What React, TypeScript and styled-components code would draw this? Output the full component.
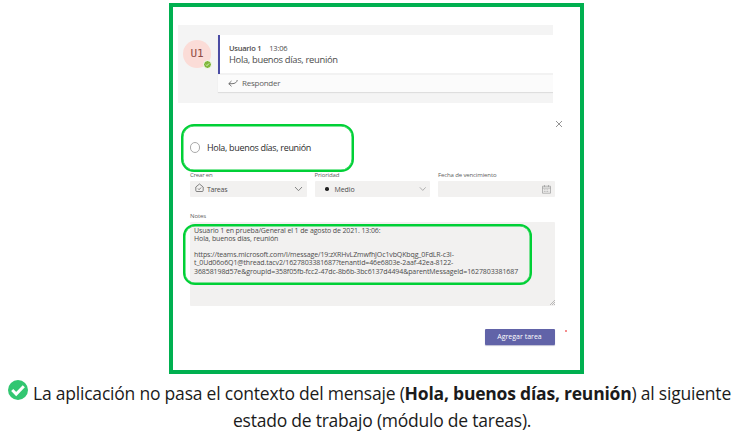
import React from 'react';
import styled, { createGlobalStyle } from 'styled-components';

const Global = createGlobalStyle`
  * { box-sizing: border-box; }
  body { margin: 0; background: #fff; font-family: "Open Sans", "Noto Sans", sans-serif; }
  svg { display: block; flex: none; }
`;

const Page = styled.main`
  width: 738px;
  height: 437px;
  padding-top: 3px;
  overflow: hidden;
`;

const Frame = styled.section`
  width: 415px;
  height: 371px;
  margin-left: 169px;
  padding: 18px 0 0 5px;
  border: 4px solid #00b050;
`;

const Line = styled.div<{ $size: number; $height: number; $spacing?: number; $color?: string; $weight?: number }>`
  font-size: ${p => p.$size}px;
  line-height: ${p => p.$height}px;
  height: ${p => p.$height}px;
  letter-spacing: ${p => p.$spacing ?? 0}px;
  color: ${p => p.$color ?? '#4c4c4c'};
  font-weight: ${p => p.$weight ?? 400};
  white-space: pre;
`;

const Label = styled.div<{ $spacing?: number }>`
  height: 10px;
  font-size: 6px;
  line-height: 8px;
  letter-spacing: ${p => p.$spacing ?? -0.12}px;
  color: #606060;
  white-space: pre;
`;

const Message = styled.div`
  display: flex;
  width: 375px;
  height: 78px;
  padding: 10px 0 0 5px;
  background: #f4f4f4;
`;

const Avatar = styled.div`
  position: relative;
  display: grid;
  place-items: center;
  width: 28px;
  height: 28px;
  margin: 5px 7px 0 0;
  border-radius: 50%;
  background: #fbdcd7;
  color: #8f4a42;
  font: 11px/14px "DejaVu Sans Mono", monospace;
`;

const Presence = styled.div`
  position: absolute;
  right: -1px;
  bottom: -1px;
  width: 9px;
  height: 9px;
  border: 1px solid #fff;
  border-radius: 50%;
  background: #80b83c;
`;

const Card = styled.div`
  width: 335px;
  height: 57px;
  background: #fbfbfb;
  box-shadow: 0 1px 1px #dedede;
  clip-path: inset(-2px 0 -3px -2px);
`;

const CardBody = styled.div`
  height: 39px;
  padding: 7.5px 0 0 9px;
  border-left: 2px solid #4a4ca4;
  background: linear-gradient(#fff 38px, #f2f2f2 38px);
`;

const Meta = styled.div`
  display: flex;
  gap: 8px;
`;

const Reply = styled.div`
  display: flex;
  align-items: center;
  gap: 4px;
  height: 18px;
  padding: 0 0 1px 10px;
  border-top: 1px solid #f2f2f2;
`;

const CloseRow = styled.div`
  display: flex;
  height: 21px;
  padding: 17px 0 0 377px;
`;

const TitleBox = styled.div`
  display: flex;
  align-items: center;
  gap: 7px;
  width: 173px;
  height: 48px;
  margin-left: 3px;
  padding: 0 0 1px 6.5px;
  border: 2px solid #00d036;
  border-radius: 13px;
  box-shadow: inset 0 0 0 .5px #00d036;
`;

const Radio = styled.div`
  width: 10.5px;
  height: 10.5px;
  border: 1px solid #aaa;
  border-radius: 50%;
`;

const Fields = styled.div`
  display: grid;
  grid-template-columns: 116.5px 115.5px 116.5px;
  gap: 8px;
  margin: -1px 0 0 12px;
`;

const Control = styled.div<{ $left: number }>`
  display: flex;
  align-items: center;
  height: 16px;
  padding: 0 4px 0 ${p => p.$left}px;
  background: #f2f1f0;
  border-radius: 1px;
  & > :last-child { margin-left: auto; }
`;

const Bullet = styled.div`
  width: 3.5px;
  height: 3.5px;
  margin-right: 6px;
  border-radius: 50%;
  background: #222;
`;

const Home = styled.svg`
  margin: -2px 3.5px 0 0;
`;

const NotesLabel = styled.div`
  height: 25px;
  padding: 15px 0 0 12px;
`;

const Notes = styled.div`
  position: relative;
  width: 364.5px;
  height: 84px;
  margin-left: 12px;
  padding: 5px 0 0 4px;
  background: #f2f1f0;
  border-radius: 1px;
`;

const Highlight = styled.div`
  position: absolute;
  left: -7px;
  top: 2px;
  width: 349px;
  height: 61px;
  border: 2px solid #00d036;
  border-radius: 12px;
  box-shadow: inset 0 0 0 .5px #00d036;
`;

const Grip = styled.div`
  position: absolute;
  right: 0;
  bottom: 1px;
`;

const Actions = styled.div`
  display: flex;
  gap: 10.5px;
  margin: 23px 0 0 306.5px;
`;

const Button = styled.button`
  display: grid;
  place-items: center;
  width: 70px;
  height: 16px;
  padding: 0;
  border: 0;
  border-radius: 1px;
  background: #6163a8;
  box-shadow: 0 1px 1px #bdbdd2;
  font-family: inherit;
`;

const RedDot = styled.div`
  width: 2px;
  height: 2px;
  margin-top: 1px;
  background: #f58d8d;
`;

const Caption = styled.footer`
  display: grid;
  grid-template-columns: 20px 1fr;
  column-gap: 5px;
  padding: 6px 0 0 8px;
`;

const SecondLine = styled.div`
  grid-column: 1 / -1;
  padding-left: 225px;
`;

const Chevron = ({ size = 9, color = '#777' }: { size?: number; color?: string }) => (
  <svg width={size} height="6" viewBox="0 0 9 6" fill="none" stroke={color} strokeWidth=".9"><path d="M1 1l3.5 3.7L8 1" /></svg>
);

export default function App() {
  return (
    <Page>
      <Global />
      <Frame>
        <Message>
          <Avatar>U1<Presence>
            <svg width="7" height="7" viewBox="0 0 7 7" fill="none" stroke="#e8f5d8" strokeWidth=".9"><path d="M2 3.6l1 1L5 2.5" /></svg>
          </Presence></Avatar>
          <Card>
            <CardBody>
              <Meta>
                <Line $size={7.5} $height={10} $spacing={-0.25} $weight={600}>Usuario 1</Line>
                <Line $size={7.5} $height={10} $spacing={-0.2}>13:06</Line>
              </Meta>
              <Line $size={9.4} $height={14} $spacing={-0.32}>Hola, buenos días, reunión</Line>
            </CardBody>
            <Reply>
              <svg width="10" height="8" viewBox="0 0 10 8" fill="none" stroke="#666" strokeWidth=".9"><path d="M9.3 1C8.8 3.4 7 4.7 4 4.7H.8M3.5 2L.8 4.7l2.7 2.6" /></svg>
              <Line $size={8} $height={12} $spacing={-0.25} $color="#606060">Responder</Line>
            </Reply>
          </Card>
        </Message>
        <CloseRow>
          <svg width="8" height="8" viewBox="0 0 8 8" stroke="#888" strokeWidth=".9"><path d="M1 1l6 6M7 1L1 7" /></svg>
        </CloseRow>
        <TitleBox>
          <Radio />
          <Line $size={9} $height={13} $spacing={-0.32} $color="#2c2c2c">Hola, buenos días, reunión</Line>
        </TitleBox>
        <Fields>
          <div>
            <Label $spacing={-0.2}>Crear en</Label>
            <Control $left={4.5}>
              <Home width="9" height="10" viewBox="0 0 9 10" fill="none" stroke="#666" strokeWidth=".8"><path d="M.8 4L4.5 1l3.7 3v3.5q0 1-1 1H1.8q-1 0-1-1zM3 5.5l1.1 1.2 2-2.2" /></Home>
              <Line $size={7} $height={11} $spacing={-0.25}>Tareas</Line>
              <Chevron />
            </Control>
          </div>
          <div>
            <Label>Prioridad</Label>
            <Control $left={10.5}>
              <Bullet />
              <Line $size={7} $height={11} $spacing={-0.1}>Medio</Line>
              <Chevron size={7.5} color="#999" />
            </Control>
          </div>
          <div>
            <Label>Fecha de vencimiento</Label>
            <Control $left={4}>
              <svg width="9" height="9" viewBox="0 0 9 9" fill="none" stroke="#999" strokeWidth=".7"><path d="M.5 1.2h8v7h-8zM.5 3.1h8M2.5 0v2M6.5 0v2" /><path d="M1.8 4.8h5.4M1.8 6.5h5.4" strokeDasharray="1 .7" /></svg>
            </Control>
          </div>
        </Fields>
        <NotesLabel><Label>Notes</Label></NotesLabel>
        <Notes>
          <Line $size={7} $height={8.2} $spacing={-0.12}>Usuario 1 en prueba/General el 1 de agosto de 2021. 13:06:</Line>
          <Line $size={7} $height={8.2} $spacing={-0.12}>Hola, buenos días, reunión</Line>
          <Line $size={7} $height={7.4}> </Line>
          <Line $size={7} $height={8.7} $spacing={-0.12}>https://teams.microsoft.com/l/message/19:zXRHvLZmwfhJOc1vbQKbqg_0FdLR-c3I-</Line>
          <Line $size={7} $height={8.7} $spacing={-0.12}>t_0Ud06o6Q1@thread.tacv2/1627803381687?tenantId=46e6803e-2aaf-42ea-8122-</Line>
          <Line $size={7} $height={8.7} $spacing={-0.09}>36858198d57e&amp;groupId=358f05fb-fcc2-47dc-8b6b-3bc6137d4494&amp;parentMessageId=1627803381687</Line>
          <Highlight />
          <Grip><svg width="5" height="5" viewBox="0 0 5 5" stroke="#aaa" strokeWidth=".8"><path d="M0 5L5 0M2 5l3-3M4 5l1-1" /></svg></Grip>
        </Notes>
        <Actions>
          <Button><Line $size={7} $height={14} $color="#fff">Agregar tarea</Line></Button>
          <RedDot />
        </Actions>
      </Frame>
      <Caption>
        <svg width="20" height="20" viewBox="0 0 20 20"><circle cx="10" cy="10" r="10" fill="#32c671" /><path d="M4.2 10l4 4 7.6-7.7" fill="none" stroke="#fff" strokeWidth="3" /></svg>
        <Line $size={17.5} $height={27} $spacing={-0.21} $color="#1b1b1b">La aplicación no pasa el contexto del mensaje (<b>Hola, buenos días, reunión</b>) al siguiente</Line>
        <SecondLine><Line $size={17.5} $height={27} $spacing={-0.23} $color="#1b1b1b">estado de trabajo (módulo de tareas).</Line></SecondLine>
      </Caption>
    </Page>
  );
}
